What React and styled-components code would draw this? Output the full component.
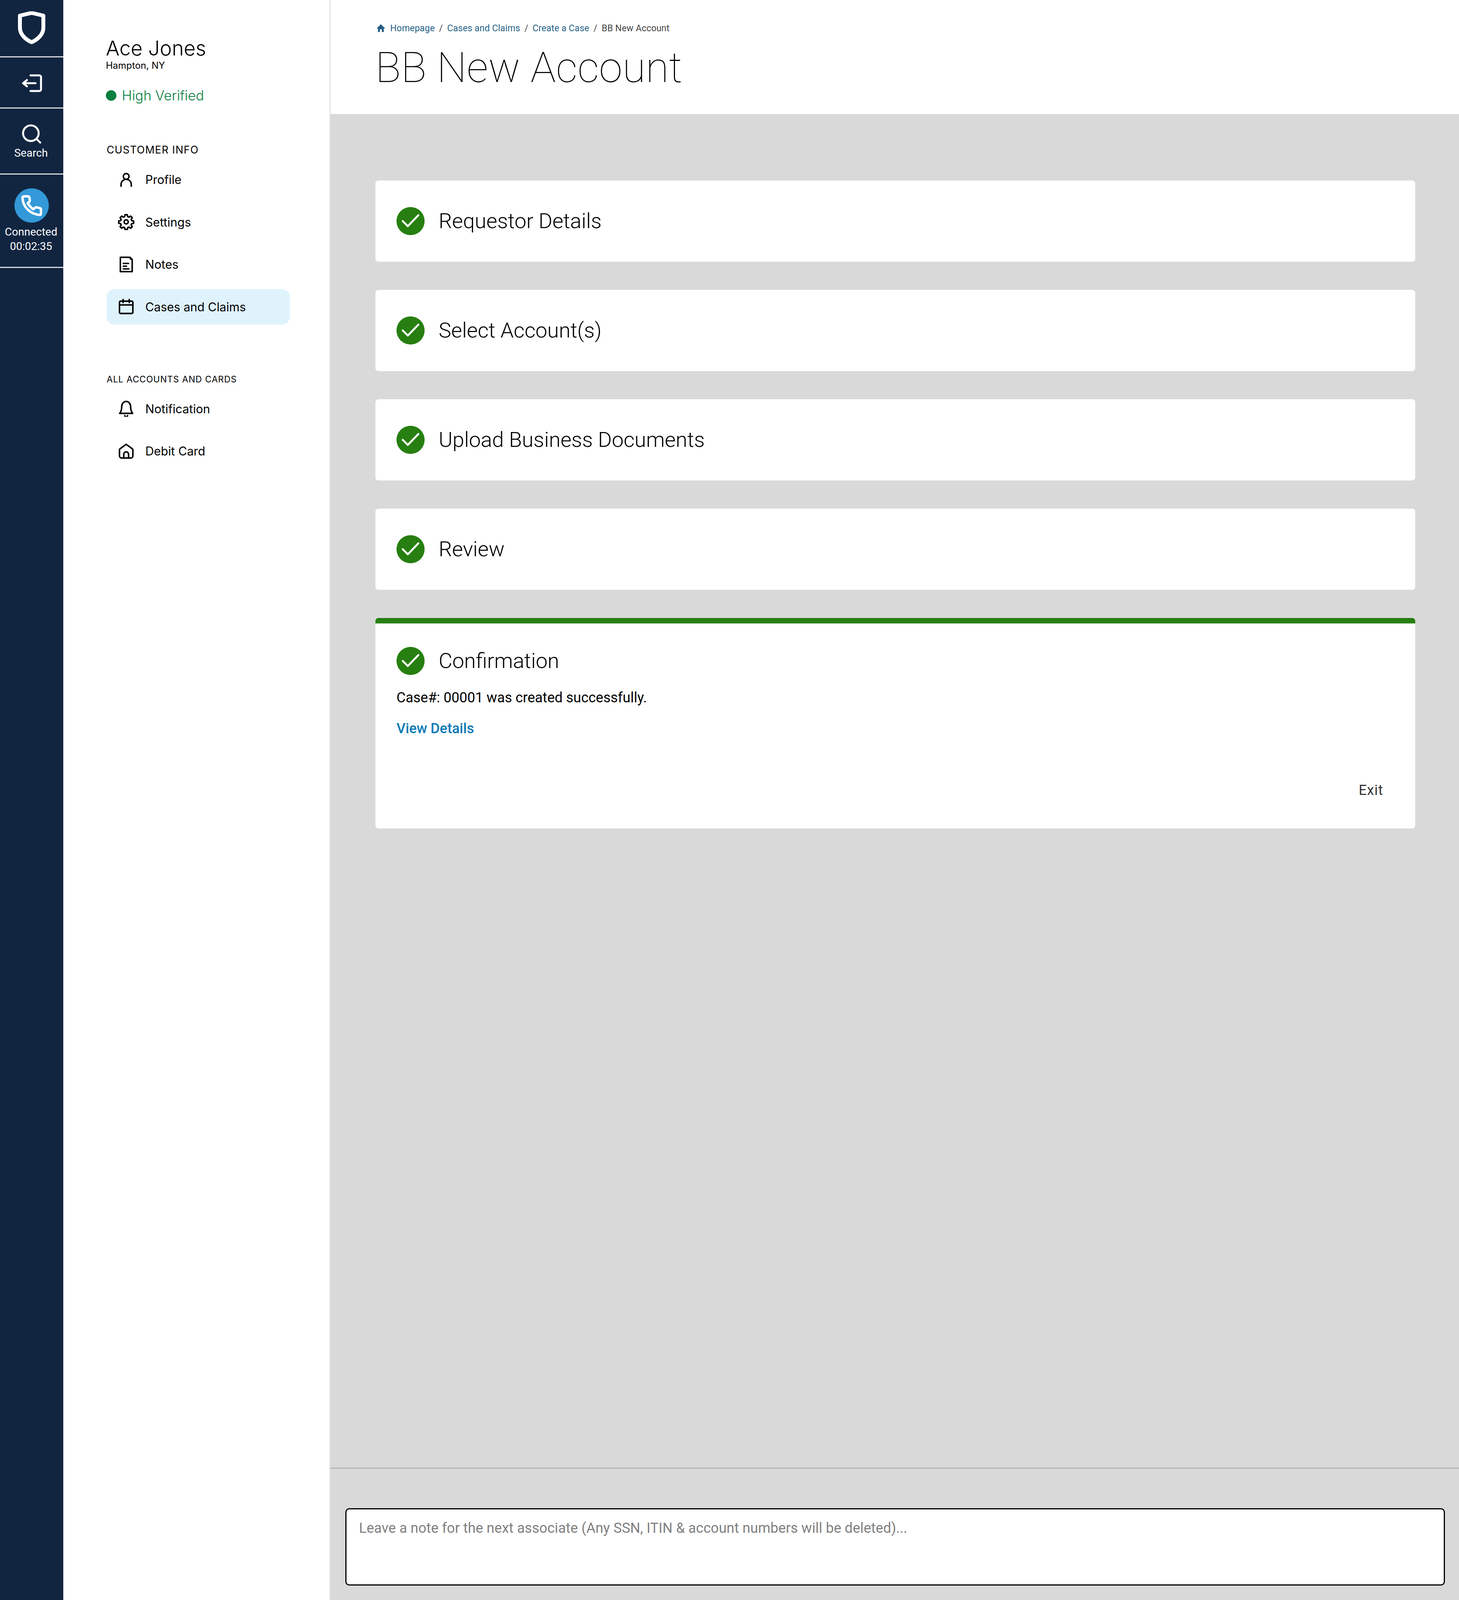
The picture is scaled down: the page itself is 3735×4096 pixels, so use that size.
import React from "react";
import styled, { createGlobalStyle } from "styled-components";

const Global = createGlobalStyle`
  * { box-sizing: border-box; }
  html, body { margin: 0; padding: 0; background: #fff; }
  body { font-family: Inter, "Liberation Sans", sans-serif; color: #000; }
`;

const Page = styled.div`
  display: flex;
  width: 3735px;
  height: 4096px;
  overflow: hidden;
`;

const Rail = styled.nav`
  width: 162px;
  flex: none;
  background: #112540;
  display: flex;
  flex-direction: column;
  color: #fff;
`;

const RailCell = styled.div`
  height: ${(p) => p.$h}px;
  padding-top: ${(p) => p.$top || 0}px;
  border-bottom: 3px solid #d9d9d9;
  display: flex;
  flex-direction: column;
  align-items: center;
  justify-content: ${(p) => (p.$center ? "center" : "flex-start")};
`;

const RailLabel = styled.div`
  font-family: Roboto, sans-serif;
  font-size: 28px;
  line-height: 37px;
  margin-top: ${(p) => p.$top || 0}px;
  text-align: center;
  color: #fff;
  margin-left: -3px;
`;

const PhoneBadge = styled.div`
  width: 88px;
  height: 88px;
  border-radius: 50%;
  background: #3399d8;
  margin-bottom: 5px;
`;

const Side = styled.aside`
  width: 684px;
  flex: none;
  background: #fff;
  border-right: 2px solid #d9d9d9;
  padding: 92px 0 0 110px;
`;

const Name = styled.div`
  font-size: 52px;
  font-weight: 350;
  line-height: 64px;
  margin-left: -1px;
`;

const City = styled.div`
  font-size: 24px;
  line-height: 30px;
  font-weight: 400;
  margin-top: -3px;
  margin-left: -1px;
`;

const Verified = styled.div`
  display: flex;
  align-items: center;
  gap: 14px;
  margin-top: 38px;
  font-size: 35px;
  line-height: 46px;
  font-weight: 300;
  color: #0a7f40;
  margin-left: -1px;
`;

const Dot = styled.span`
  width: 27px;
  height: 27px;
  border-radius: 50%;
  background: #0a7f40;
`;

const SectionLabel = styled.div`
  font-size: ${(p) => p.$size}px;
  letter-spacing: ${(p) => p.$track}px;
  line-height: 34px;
  margin-top: ${(p) => p.$top}px;
  margin-left: 1px;
`;

const Menu = styled.ul`
  list-style: none;
  margin: ${(p) => p.$top}px 0 0;
  padding: 0;
  width: 470px;
  display: flex;
  flex-direction: column;
  gap: 17.5px;
`;

const Item = styled.li`
  height: 91px;
  padding-left: 30px;
  display: flex;
  align-items: center;
  gap: 29px;
  font-size: 30.5px;
  font-weight: 400;
  border-radius: 20px;
  background: ${(p) => (p.$active ? "#dff3fd" : "transparent")};
  margin-left: 1px;
`;

const IconSvg = styled.svg`
  width: 42px;
  height: 42px;
  flex: none;
  margin: 0 -1px;
  fill: none;
  stroke: #000;
  stroke-width: 2.2;
  stroke-linecap: round;
  stroke-linejoin: round;
`;

const Main = styled.main`
  flex: 1;
  min-width: 0;
  display: flex;
  flex-direction: column;
  background: #d9d9d9;
`;

const Header = styled.header`
  height: 292px;
  flex: none;
  background: #fff;
  padding: 54px 0 0 115px;
`;

const Crumbs = styled.div`
  display: flex;
  align-items: center;
  height: 36px;
  font-family: Roboto, sans-serif;
  font-size: 23px;
  letter-spacing: 0.2px;
  color: #245f85;
`;

const Crumb = styled.span`
  color: ${(p) => (p.$current ? "#444" : "#245f85")};
`;

const Sep = styled.span`
  margin: 0 11px;
  color: #444;
`;

const HomeSvg = styled.svg`
  width: 24px;
  height: 24px;
  margin: 0 12px 0 2px;
`;

const Title = styled.h1`
  margin: 18px 0 0 0;
  font-family: Roboto, sans-serif;
  font-weight: 150;
  font-size: 108px;
  letter-spacing: 0.4px;
  line-height: 130px;
  color: #000;
`;

const Body = styled.div`
  flex: 1;
  padding: 170px 112px 0 115px;
  display: flex;
  flex-direction: column;
  gap: 72px;
`;

const Card = styled.section`
  background: #fff;
  border-radius: 8px;
  padding: 0 54px;
  height: 208px;
  display: flex;
  align-items: center;
  gap: 36px;
`;

const OpenCard = styled.section`
  background: #fff;
  border-radius: 8px;
  border-top: 14px solid #267f10;
  height: 539px;
  padding: 60px 82px 0 54px;
  display: flex;
  flex-direction: column;
`;

const StepHead = styled.div`
  display: flex;
  align-items: center;
  gap: 36px;
`;

const StepName = styled.h2`
  margin: 0;
  font-family: Roboto, sans-serif;
  font-weight: 300;
  font-size: 54px;
  line-height: 72px;
  color: #000;
`;

const Check = styled.span`
  width: 72px;
  height: 72px;
  flex: none;
  border-radius: 50%;
  background: #267f10;
  display: flex;
  align-items: center;
  justify-content: center;
`;

const Message = styled.p`
  margin: 35px 0 0;
  font-family: Roboto, sans-serif;
  font-size: 36px;
  line-height: 46px;
`;

const DetailsLink = styled.a`
  margin-top: 33px;
  font-family: Roboto, sans-serif;
  font-size: 36px;
  line-height: 46px;
  font-weight: 500;
  color: #0a7ab5;
`;

const ExitButton = styled.div`
  margin-top: 112px;
  align-self: flex-end;
  font-family: Roboto, sans-serif;
  font-size: 36px;
  letter-spacing: 1px;
  line-height: 46px;
  color: #333;
`;

const Footer = styled.footer`
  height: 339px;
  flex: none;
  border-top: 3px solid #b9b4b4;
  padding: 101px 36px 0 38px;
`;

const Note = styled.div`
  height: 198px;
  background: #fff;
  border: 3px solid #000;
  border-radius: 10px;
  padding: 25px 32px;
  font-family: Roboto, sans-serif;
  font-size: 36px;
  letter-spacing: 0.06px;
  line-height: 46px;
  color: #808080;
`;

const Shield = () => (
  <svg width="72" height="86" viewBox="0 0 72 86">
    <path d="M36 4 L66 11 V42 C66 60 50 73 36 79 C22 73 6 60 6 42 V11 Z" fill="none" stroke="#fff" strokeWidth="10" strokeLinejoin="round" />
  </svg>
);

const ExitIcon = () => (
  <svg width="54" height="46" viewBox="0 0 54 46" fill="none" stroke="#fff" strokeWidth="5" strokeLinecap="round" strokeLinejoin="round">
    <path d="M24 3 H47 a4 4 0 0 1 4 4 V39 a4 4 0 0 1 -4 4 H24" />
    <path d="M37 23 H5 M5 23 L15 15 M5 23 L15 31" />
  </svg>
);

const SearchIcon = () => (
  <svg width="50" height="50" viewBox="0 0 50 50" fill="none" stroke="#fff" strokeWidth="5" strokeLinecap="round">
    <circle cx="23" cy="23" r="20" />
    <path d="M37 37 L47 47" />
  </svg>
);

const PhoneIcon = () => (
  <svg width="88" height="88" viewBox="25 65 350 350" fill="none" stroke="#fff" strokeWidth="25" strokeLinecap="round" strokeLinejoin="round">
    <path d="M122 147 H160 Q176 147 178 162 L181 188 Q182 196 175 203 L160 217 Q190 262 217 278 L235 263 Q243 257 252 259 L282 266 Q295 270 295 285 V322 Q295 337 280 336 C190 328 110 260 107 162 Q107 147 122 147 Z" />
  </svg>
);

const CheckMark = () => (
  <svg width="56" height="44" viewBox="0 0 56 44" fill="none" stroke="#fff" strokeWidth="5" strokeLinecap="round" strokeLinejoin="round">
    <path d="M8 22 L21 35 L48 7" />
  </svg>
);

const HomeGlyph = () => (
  <HomeSvg viewBox="0 0 24 24">
    <path d="M12 2 L23 13 H19.5 V22 H14.5 V15 H9.5 V22 H4.5 V13 H1 Z" fill="#245f85" />
  </HomeSvg>
);

const icons = {
  profile: (
    <IconSvg viewBox="0 0 24 24">
      <circle cx="12" cy="7.2" r="4.2" />
      <path d="M4.5 21.5 V19 a7.5 7.5 0 0 1 15 0 V21.5" />
    </IconSvg>
  ),
  settings: (
    <IconSvg viewBox="0 0 24 24">
      <circle cx="12" cy="12" r="3" />
      <path d="M10.3 1.5h3.4l.5 2.8 1.9.8 2.4-1.6 2.4 2.4-1.6 2.4.8 1.9 2.8.5v3.4l-2.8.5-.8 1.9 1.6 2.4-2.4 2.4-2.4-1.6-1.9.8-.5 2.8h-3.4l-.5-2.8-1.9-.8-2.4 1.6-2.4-2.4 1.6-2.4-.8-1.9-2.8-.5v-3.4l2.8-.5.8-1.9-1.6-2.4 2.4-2.4 2.4 1.6 1.9-.8z" />
    </IconSvg>
  ),
  notes: (
    <IconSvg viewBox="0 0 24 24">
      <path d="M3.5 1.5 H17.5 L20.8 4.8 V22.5 H3.5 Z" />
      <path d="M17.5 1.5 V4.8 H20.8" strokeWidth="0.8" />
      <path d="M7.8 10.5 H15.5 M7.8 14.5 H12.5 M7.8 18.5 H16" />
    </IconSvg>
  ),
  cases: (
    <IconSvg viewBox="0 0 24 24">
      <rect x="2.2" y="4" width="19.6" height="18" rx="1.6" />
      <path d="M2.2 9.5 H21.8 M7.5 1.5 V6 M16.5 1.5 V6 M7.5 4 H16.5" />
    </IconSvg>
  ),
  bell: (
    <IconSvg viewBox="0 0 24 24">
      <path d="M2.5 19 C5 16 5.5 13 5.5 9 a6.5 7.5 0 0 1 13 0 C18.5 13 19 16 21.5 19 Z" />
      <path d="M10 22.2 a2 2 0 0 0 4 0" />
    </IconSvg>
  ),
  home: (
    <IconSvg viewBox="0 0 24 24">
      <path d="M12 2 L21 8.5 a2 2 0 0 1 .8 1.6 V19 a3 3 0 0 1 -3 3 H5.2 a3 3 0 0 1 -3 -3 V10.1 a2 2 0 0 1 .8 -1.6 Z" />
      <path d="M8.5 22 V16.5 a3.5 3.5 0 0 1 7 0 V22" />
    </IconSvg>
  ),
};

const NavItem = ({ icon, label, active }) => (
  <Item $active={active}>
    {icons[icon]}
    {label}
  </Item>
);

const Step = ({ name }) => (
  <Card>
    <Check><CheckMark /></Check>
    <StepName>{name}</StepName>
  </Card>
);

export default function App() {
  return (
    <Page>
      <Global />
      <Rail>
        <RailCell $h={147} $center><Shield /></RailCell>
        <RailCell $h={131} $center $top={4}><ExitIcon /></RailCell>
        <RailCell $h={169} $top={40}>
          <SearchIcon />
          <RailLabel $top={5}>Search</RailLabel>
        </RailCell>
        <RailCell $h={239} $top={35}>
          <PhoneBadge><PhoneIcon /></PhoneBadge>
          <RailLabel>Connected<br />00:02:35</RailLabel>
        </RailCell>
      </Rail>
      <Side>
        <Name>Ace Jones</Name>
        <City>Hampton, NY</City>
        <Verified><Dot />High Verified</Verified>
        <SectionLabel $size={26.5} $track={1.2} $top={99}>CUSTOMER INFO</SectionLabel>
        <Menu $top={14}>
          <NavItem icon="profile" label="Profile" />
          <NavItem icon="settings" label="Settings" />
          <NavItem icon="notes" label="Notes" />
          <NavItem icon="cases" label="Cases and Claims" active />
        </Menu>
        <SectionLabel $size={22.4} $track={1} $top={123}>ALL ACCOUNTS AND CARDS</SectionLabel>
        <Menu $top={13}>
          <NavItem icon="bell" label="Notification" />
          <NavItem icon="home" label="Debit Card" />
        </Menu>
      </Side>
      <Main>
        <Header>
          <Crumbs>
            <HomeGlyph />
            <Crumb>Homepage</Crumb><Sep>/</Sep>
            <Crumb>Cases and Claims</Crumb><Sep>/</Sep>
            <Crumb>Create a Case</Crumb><Sep>/</Sep>
            <Crumb $current>BB New Account</Crumb>
          </Crumbs>
          <Title>BB New Account</Title>
        </Header>
        <Body>
          <Step name="Requestor Details" />
          <Step name="Select Account(s)" />
          <Step name="Upload Business Documents" />
          <Step name="Review" />
          <OpenCard>
            <StepHead>
              <Check><CheckMark /></Check>
              <StepName>Confirmation</StepName>
            </StepHead>
            <Message>Case#: 00001 was created successfully.</Message>
            <DetailsLink>View Details</DetailsLink>
            <ExitButton>Exit</ExitButton>
          </OpenCard>
        </Body>
        <Footer>
          <Note>Leave a note for the next associate (Any SSN, ITIN &amp; account numbers will be deleted)...</Note>
        </Footer>
      </Main>
    </Page>
  );
}
